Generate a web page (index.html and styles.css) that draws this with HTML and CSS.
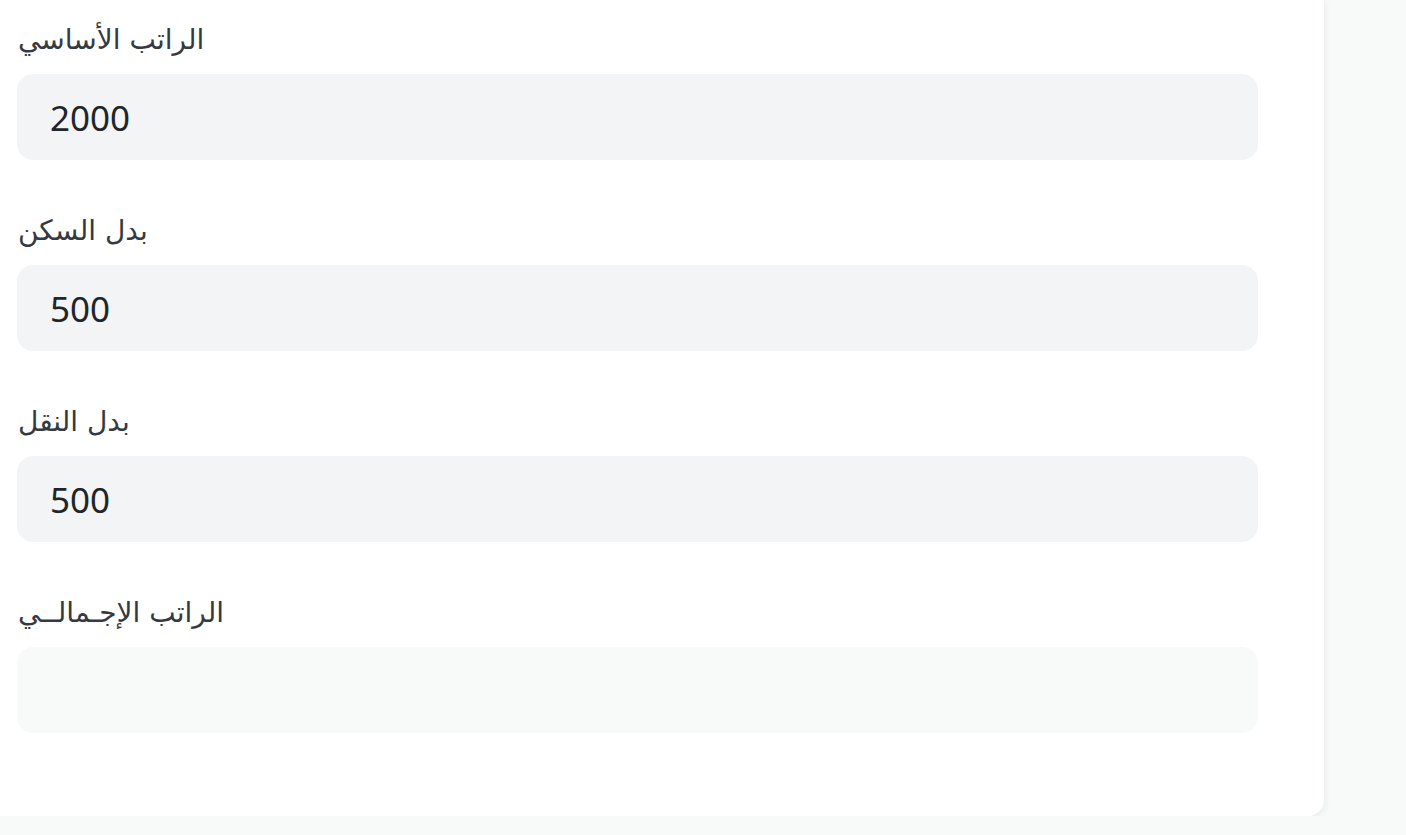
FILE: index.html
```html
<!DOCTYPE html>
<html>
<head>
    <meta charset="utf-8">
    <title>حاسبة الراتب</title>
    <link rel="stylesheet" href="styles.css">
</head>
<body>
    <div class="card">
        <div class="field">
            <label for="basic">الراتب الأساسي</label>
            <input type="text" id="basic" value="2000">
        </div>
        <div class="field">
            <label for="housing">بدل السكن</label>
            <input type="text" id="housing" value="500">
        </div>
        <div class="field">
            <label for="transport">بدل النقل</label>
            <input type="text" id="transport" value="500">
        </div>
        <div class="field">
            <label for="total">الراتب الإجـمالــي</label>
            <input type="text" id="total" class="readonly" readonly>
        </div>
    </div>
</body>
</html>
```

FILE: styles.css
```css
body {
    margin: 0;
    background-color: #f8f9f9;
    font-family: "Noto Sans", "DejaVu Sans", sans-serif;
    color: #212529;
}
.card {
    width: 1324px;
    box-sizing: border-box;
    background-color: #fff;
    border-bottom-right-radius: 16px;
    box-shadow: 0 2px 8px rgba(0, 0, 0, 0.08);
    padding: 20px 66px 83px 17px;
}
.field {
    margin-bottom: 51px;
}
.field:last-child {
    margin-bottom: 0;
}
label {
    display: block;
    font-family: "DejaVu Sans", sans-serif;
    font-size: 28px;
    line-height: 40px;
    color: #343a40;
    margin: 0 0 14px 1px;
}
input {
    display: block;
    width: 100%;
    height: 86px;
    box-sizing: border-box;
    border: none;
    border-radius: 16px;
    background-color: #f3f4f6;
    padding: 0 33px;
    font-family: "Noto Sans", sans-serif;
    font-size: 35px;
    color: #212529;
    outline: none;
}
input.readonly {
    background-color: #f8f9f9;
}
```
